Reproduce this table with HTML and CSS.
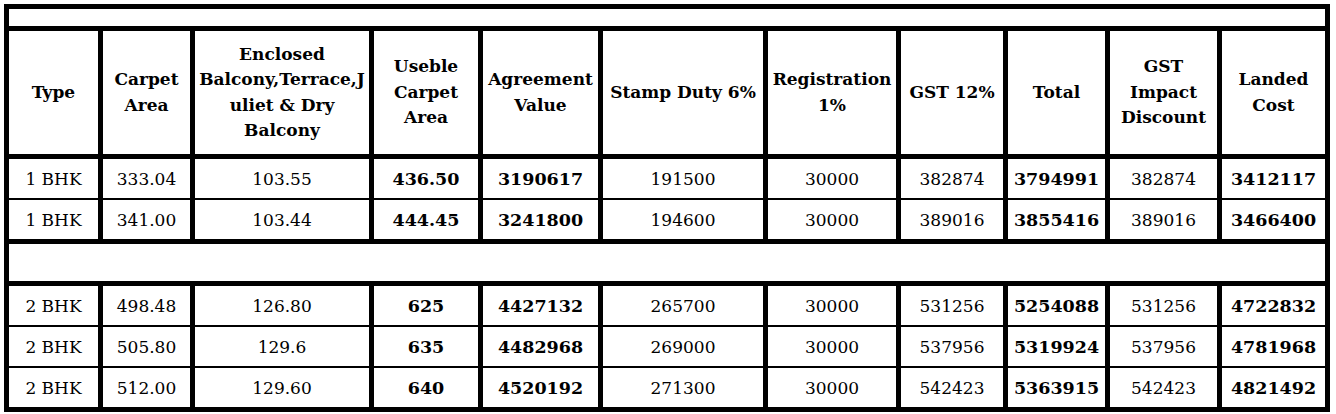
FILE: index.html
```html
<!DOCTYPE html>
<html>
<head>
<meta charset="utf-8">
<link rel="stylesheet" href="styles.css">
</head>
<body>
<div class="sheet">
  <div class="band band-top"></div>
  <div class="grid head">
    <div class="cell">Type</div>
    <div class="cell">Carpet<br>Area</div>
    <div class="cell">Enclosed<br>Balcony,Terrace,J<br>uliet &amp; Dry<br>Balcony</div>
    <div class="cell">Useble<br>Carpet<br>Area</div>
    <div class="cell">Agreement<br>Value</div>
    <div class="cell">Stamp Duty 6%</div>
    <div class="cell">Registration<br>1%</div>
    <div class="cell">GST 12%</div>
    <div class="cell">Total</div>
    <div class="cell">GST<br>Impact<br>Discount</div>
    <div class="cell">Landed<br>Cost</div>
  </div>
  <div class="grid body">
    <div class="cell">1 BHK</div><div class="cell">333.04</div><div class="cell">103.55</div><div class="cell b">436.50</div><div class="cell b">3190617</div><div class="cell">191500</div><div class="cell">30000</div><div class="cell">382874</div><div class="cell b">3794991</div><div class="cell">382874</div><div class="cell b">3412117</div>
    <div class="cell">1 BHK</div><div class="cell">341.00</div><div class="cell">103.44</div><div class="cell b">444.45</div><div class="cell b">3241800</div><div class="cell">194600</div><div class="cell">30000</div><div class="cell">389016</div><div class="cell b">3855416</div><div class="cell">389016</div><div class="cell b">3466400</div>
  </div>
  <div class="band band-mid"></div>
  <div class="grid body last">
    <div class="cell">2 BHK</div><div class="cell">498.48</div><div class="cell">126.80</div><div class="cell b">625</div><div class="cell b">4427132</div><div class="cell">265700</div><div class="cell">30000</div><div class="cell">531256</div><div class="cell b">5254088</div><div class="cell">531256</div><div class="cell b">4722832</div>
    <div class="cell">2 BHK</div><div class="cell">505.80</div><div class="cell">129.6</div><div class="cell b">635</div><div class="cell b">4482968</div><div class="cell">269000</div><div class="cell">30000</div><div class="cell">537956</div><div class="cell b">5319924</div><div class="cell">537956</div><div class="cell b">4781968</div>
    <div class="cell">2 BHK</div><div class="cell">512.00</div><div class="cell">129.60</div><div class="cell b">640</div><div class="cell b">4520192</div><div class="cell">271300</div><div class="cell">30000</div><div class="cell">542423</div><div class="cell b">5363915</div><div class="cell">542423</div><div class="cell b">4821492</div>
  </div>
</div>
</body>
</html>
```
FILE: styles.css
```css
html, body {
  margin: 0;
  padding: 0;
  background: #fff;
}
body {
  font-family: "DejaVu Serif", "Liberation Serif", serif;
  color: #000;
}
.sheet {
  box-sizing: border-box;
  width: 1326px;
  margin: 4px 0 0 4px;
  border: 5px solid #000;
  background: #fff;
}
.band {
  background: #fff;
  border-bottom: 5px solid #000;
}
.band-top { height: 17px; }
.band-mid { height: 37px; }
.grid {
  display: grid;
  grid-template-columns: 89px 87px 174px 104px 115px 160px 128px 102px 97px 107px 103px;
  column-gap: 5px;
  row-gap: 2px;
  background: #000;
}
.head {
  grid-auto-rows: 123px;
  border-bottom: 5px solid #000;
}
.body {
  grid-auto-rows: 39px;
  border-bottom: 5px solid #000;
}
.body.last { border-bottom: 0; }
.cell {
  background: #fff;
  display: flex;
  align-items: center;
  justify-content: center;
  text-align: center;
  white-space: nowrap;
}
.head .cell {
  font-weight: bold;
  font-size: 17px;
  line-height: 25.5px;
}
.body .cell {
  font-size: 17px;
}
.body .cell.b {
  font-weight: bold;
  font-size: 17.5px;
}
```
